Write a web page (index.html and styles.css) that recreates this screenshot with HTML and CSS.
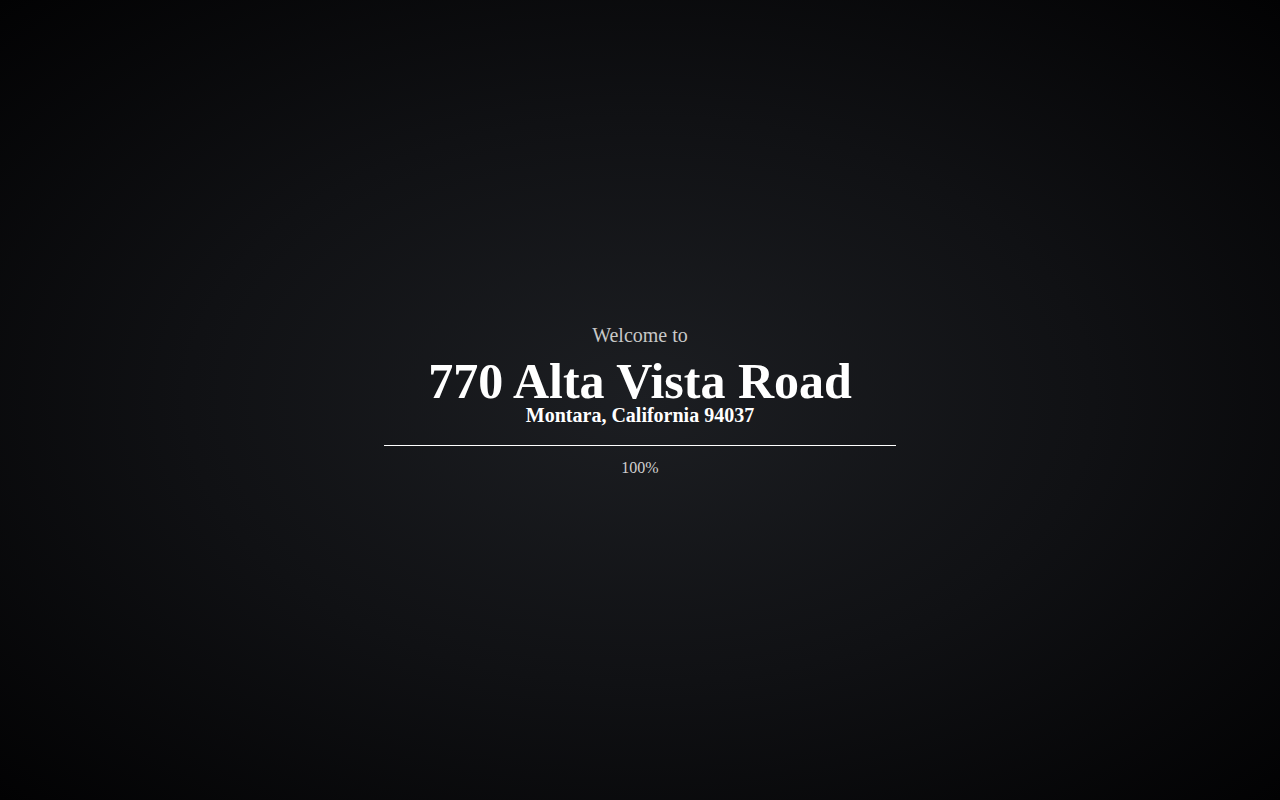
FILE: index.html
```html
<!DOCTYPE html>
<html>
<head>
<meta charset="utf-8">
<link rel="stylesheet" href="styles.css">
</head>
<body>
<div class="screen">
  <div class="intro">
    <div class="welcome">Welcome to</div>
    <h1 class="title">770 Alta Vista Road</h1>
    <div class="subtitle">Montara, California 94037</div>
    <div class="bar"></div>
    <div class="percent">100%</div>
  </div>
</div>
</body>
</html>
```
FILE: styles.css
```css
html, body {
  margin: 0;
  padding: 0;
  height: 100%;
}
body {
  font-family: "Liberation Serif", "Times New Roman", serif;
  background: #000;
}
.screen {
  width: 1280px;
  height: 800px;
  background: radial-gradient(ellipse at center, #1c1e22 0%, #101114 50%, #020203 100%);
  display: flex;
  align-items: center;
  justify-content: center;
}
.intro {
  width: 512px;
  display: flex;
  flex-direction: column;
  align-items: center;
  text-align: center;
}
.welcome {
  color: #c8c8c8;
  font-size: 20px;
  line-height: 24px;
}
.title {
  margin: 10px 0 0;
  color: #fff;
  font-size: 50px;
  font-weight: bold;
  line-height: 48px;
}
.subtitle {
  color: #fff;
  font-size: 20px;
  font-weight: bold;
  line-height: 20px;
}
.bar {
  width: 512px;
  height: 1px;
  background: #fff;
  margin-top: 20px;
}
.percent {
  color: #d0d0d0;
  font-size: 16px;
  line-height: 20px;
  margin-top: 12px;
}
```
